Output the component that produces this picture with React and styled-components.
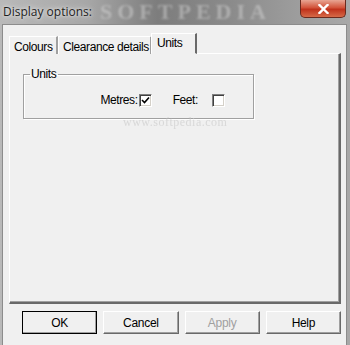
import React from 'react';
import styled, { createGlobalStyle } from 'styled-components';

const Global = createGlobalStyle`
  html, body { margin: 0; padding: 0; }
  body { width: 350px; height: 345px; overflow: hidden; font-family: "Liberation Sans", Arial, sans-serif; }
`;

const Window = styled.div`
  width: 350px;
  height: 345px;
  display: flex;
  flex-direction: column;
  background: linear-gradient(90deg, #b9b9b9 0%, #a7a7a7 25%, #7d7d7d 45%, #8a8a8a 65%, #9d9d9d 85%, #a8a8a8 100%);
  overflow: hidden;
`;

const TitleBar = styled.div`
  height: 24px;
  display: flex;
  align-items: flex-start;
  position: relative;
  flex: none;
`;

const Title = styled.div`
  font-family: "Open Sans", "Liberation Sans", sans-serif;
  font-size: 12px;
  color: #1e1e1e;
  padding: 3px 0 0 3px;
  text-shadow: 0 0 6px #e8e8e8, 0 0 3px #e8e8e8;
  position: relative;
  z-index: 1;
`;

const Watermark = styled.div`
  position: absolute;
  left: 100px;
  top: 0;
  font-family: "Liberation Serif", serif;
  font-weight: bold;
  font-size: 22px;
  line-height: 24px;
  letter-spacing: 5px;
  color: rgba(230, 230, 230, 0.4);
  filter: blur(1.2px);
`;

const Close = styled.div`
  margin-left: auto;
  margin-right: 4px;
  width: 44px;
  height: 17px;
  border: 1px solid #6b2a1e;
  border-top: none;
  border-radius: 0 0 5px 5px;
  background: linear-gradient(#e8a593 0%, #d2533a 45%, #c0321c 55%, #d66a48 100%);
  display: flex;
  align-items: center;
  justify-content: center;
  position: relative;
  z-index: 1;
`;

const Client = styled.div`
  flex: 1;
  margin: 0 3px 0 2px;
  background: #f0f0f0;
  border: 1px solid #8c8c8c;
  border-bottom: none;
  padding: 8px 5px 0 6px;
  display: flex;
  flex-direction: column;
  font-size: 12px;
  letter-spacing: -0.4px;
`;

const TabStrip = styled.div`
  display: flex;
  align-items: flex-end;
  height: 21px;
  position: relative;
  z-index: 1;
  margin-bottom: -1px;
`;

const Tab = styled.div`
  box-sizing: border-box;
  width: ${p => p.w}px;
  height: ${p => (p.active ? 21 : 18)}px;
  white-space: nowrap;
  border-top: 1px solid #fff;
  border-left: 1px solid #fff;
  border-right: 2px solid ${p => (p.active ? '#696969' : '#a0a0a0')};
  background: #f0f0f0;
  color: #000;
  padding: ${p => (p.active ? '2px 0 0 5px' : '3px 0 0 4px')};
  margin-left: ${p => (p.active ? -1 : 0)}px;
  ${p => p.active && 'border-bottom: 1px solid #f0f0f0;'}
`;

const Panel = styled.div`
  box-sizing: border-box;
  height: 251px;
  border-top: 1px solid #fff;
  border-left: 1px solid #fff;
  border-right: 2px solid #696969;
  border-bottom: 2px solid #696969;
  box-shadow: inset -1px -1px 0 #a0a0a0;
  padding: 13px 0 0 13px;
  position: relative;
`;

const Group = styled.fieldset`
  box-sizing: border-box;
  width: 231px;
  height: 52px;
  margin: 0;
  padding: 0;
  border: 1px solid #a0a0a0;
  box-shadow: inset 1px 1px 0 #fff, 1px 1px 0 #fff;
  display: flex;
  align-items: flex-start;
  justify-content: flex-end;
`;

const Legend = styled.legend`
  padding: 0 2px 0 1px;
  margin-left: 6px;
  color: #000;
`;

const Row = styled.div`
  display: flex;
  align-items: center;
  margin: 12px 28px 0 0;
  color: #000;
`;

const Label = styled.span`
  margin-right: ${p => p.gap}px;
`;

const Check = styled.div`
  box-sizing: border-box;
  width: 13px;
  height: 13px;
  border-top: 1px solid #808080;
  border-left: 1px solid #808080;
  border-right: 1px solid #fff;
  border-bottom: 1px solid #fff;
  box-shadow: inset 1px 1px 0 #404040, inset -1px -1px 0 #d4d0c8;
  background: #fff;
  margin-right: ${p => p.mr || 0}px;
  display: flex;
  align-items: center;
  justify-content: center;
`;

const SiteMark = styled.div`
  position: absolute;
  left: 113px;
  top: 61px;
  font-family: "Liberation Serif", serif;
  font-size: 12px;
  letter-spacing: 0.5px;
  color: rgba(200, 200, 200, 0.6);
  filter: blur(0.5px);
`;

const Buttons = styled.div`
  display: flex;
  gap: 6px;
  padding: 7px 0 0 13px;
`;

const Button = styled.button`
  box-sizing: border-box;
  width: 77px;
  height: 23px;
  padding: 0;
  font-family: "Liberation Sans", Arial, sans-serif;
  font-size: 12px;
  letter-spacing: -0.3px;
  color: ${p => (p.disabled ? '#a0a0a0' : '#000')};
  background: #f0f0f0;
  border-top: 1px solid #fff;
  border-left: 1px solid #fff;
  border-right: 1px solid #696969;
  border-bottom: 1px solid #696969;
  box-shadow: inset -1px -1px 0 #a0a0a0;
  ${p => p.def && 'outline: 1px solid #000; outline-offset: -1px; border-right-color:#000; border-bottom-color:#000;'}
`;

export default function App() {
  return (
    <>
      <Global />
      <Window>
        <TitleBar>
          <Title>Display options:</Title>
          <Watermark>SOFTPEDIA</Watermark>
          <Close>
            <svg width="11" height="10" viewBox="0 0 11 10">
              <path d="M1.5 1 L9.5 9 M9.5 1 L1.5 9" stroke="#fff" strokeWidth="2.4" strokeLinecap="square" />
            </svg>
          </Close>
        </TitleBar>
        <Client>
          <TabStrip>
            <Tab w={49}>Colours</Tab>
            <Tab w={94}>Clearance details</Tab>
            <Tab w={46} active>Units</Tab>
          </TabStrip>
          <Panel>
            <Group>
              <Legend>Units</Legend>
              <Row>
                <Label gap={1}>Metres:</Label>
                <Check mr={21}>
                  <svg width="9" height="9" viewBox="0 0 9 9">
                    <path d="M1 4 L3.5 6.5 L8 1.5" stroke="#000" strokeWidth="1.6" fill="none" />
                  </svg>
                </Check>
                <Label gap={14}>Feet:</Label>
                <Check />
              </Row>
            </Group>
            <SiteMark>www.softpedia.com</SiteMark>
          </Panel>
          <Buttons>
            <Button def>OK</Button>
            <Button>Cancel</Button>
            <Button disabled>Apply</Button>
            <Button>Help</Button>
          </Buttons>
        </Client>
      </Window>
    </>
  );
}
